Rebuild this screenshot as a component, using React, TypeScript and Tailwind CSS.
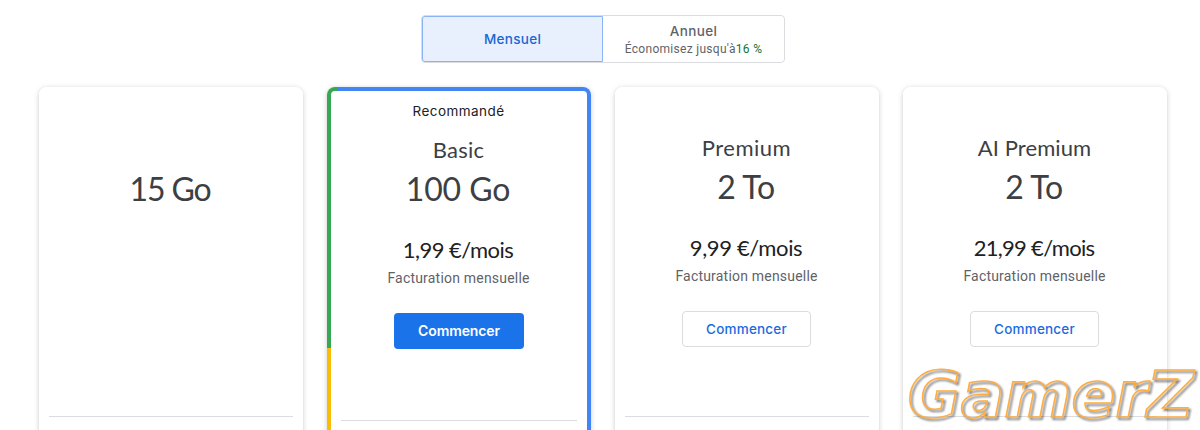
import React from "react";
import clsx from "clsx";

interface Plan {
  id: string;
  name?: string;
  storage: string;
  price?: string;
  storageSpacing: string;
  nameSpacing?: string;
  priceSpacing?: string;
  featured?: boolean;
}

const plans: Plan[] = [
  { id: "free", storage: "15 Go", storageSpacing: "tracking-[-1.1px]" },
  {
    id: "basic",
    name: "Basic",
    storage: "100 Go",
    price: "1,99 €/mois",
    storageSpacing: "tracking-[-0.1px]",
    nameSpacing: "tracking-[0.2px]",
    priceSpacing: "tracking-[-0.55px]",
    featured: true,
  },
  {
    id: "premium",
    name: "Premium",
    storage: "2 To",
    price: "9,99 €/mois",
    storageSpacing: "tracking-[-0.3px]",
    nameSpacing: "tracking-[0.5px]",
    priceSpacing: "tracking-[-0.35px]",
  },
  {
    id: "ai-premium",
    name: "AI Premium",
    storage: "2 To",
    price: "21,99 €/mois",
    storageSpacing: "tracking-[-0.3px]",
    nameSpacing: "tracking-[0.1px]",
    priceSpacing: "tracking-[-0.7px]",
  },
];

const BillingToggle: React.FC = () => {
  return (
    <div className="mx-auto flex h-12 w-[364px] translate-x-[3px] rounded border border-[#dadce0] font-['Roboto',sans-serif]">
      <button className="h-[46px] w-[181px] rounded-l-[3px] border border-[#8ab4f8] bg-[#e8f0fe] pt-px font-['Inter',sans-serif] text-[13.5px] font-medium tracking-[0.3px] text-[#1967d2]">
        Mensuel
      </button>
      <button className="flex flex-1 flex-col items-center text-[#5f6368]">
        <span className="mt-[5px] font-['Inter',sans-serif] text-[13.5px] leading-5 font-medium tracking-[0.4px]">
          Annuel
        </span>
        <span className="text-xs leading-4 tracking-[0.3px]">
          Économisez jusqu'à<span className="text-[#137333]">16 %</span>
        </span>
      </button>
    </div>
  );
};

const PlanCard: React.FC<{ plan: Plan }> = ({ plan }) => {
  return (
    <div
      className={clsx(
        "h-[400px] w-[264px] rounded-lg shadow-[0_1px_5px_rgba(60,64,67,0.28)]",
        plan.featured
          ? "bg-[linear-gradient(#34a853,#34a853),linear-gradient(#fbbc04,#fbbc04),linear-gradient(#4285f4,#4285f4)] bg-[length:11px_261px,11px_100%,100%_100%] bg-no-repeat p-1"
          : "bg-white"
      )}
    >
      <div
        className={clsx(
          "flex h-full flex-col items-center bg-white font-['Lato',sans-serif]",
          plan.featured ? "rounded-[4px]" : "rounded-lg"
        )}
      >
        <div
          className={clsx(
            "flex w-full shrink-0 justify-center pr-px font-['Inter',sans-serif] text-[13.5px] leading-5 tracking-[0.45px] text-[#202124]",
            plan.featured ? "h-[39px] pt-[10px]" : "h-[41px]"
          )}
        >
          {plan.featured && "Recommandé"}
        </div>
        <div className={clsx("h-10 shrink-0 pr-px text-[22px] leading-10 text-[#3c4043]", plan.nameSpacing)}>
          {plan.name}
        </div>
        <div
          className={clsx(
            "h-10 shrink-0 pr-[2px] text-[32px] leading-[37px] text-[#3c4043]",
            plan.storageSpacing,
            !plan.name && "translate-y-0.5"
          )}
        >
          {plan.storage}
        </div>
        <div className="flex h-52 shrink-0 flex-col items-center pt-[22px]">
          {plan.price && (
            <>
              <p className={clsx("pr-[2px] text-[22px] leading-9 text-[#202124]", plan.priceSpacing)}>{plan.price}</p>
              <p className="pr-px font-['Roboto',sans-serif] text-sm leading-5 tracking-[0.2px] text-[#5f6368]">
                Facturation mensuelle
              </p>
              <button
                className={clsx(
                  "mt-[25px] h-9 rounded font-['Inter',sans-serif] text-sm",
                  plan.featured
                    ? "w-[130px] bg-[#1a73e8] font-semibold tracking-[-0.1px] text-white"
                    : "mr-px w-[129px] border border-[#dadce0] pt-px text-[13.5px] font-medium tracking-[0.2px] text-[#1a6be0]"
                )}
              >
                Commencer
              </button>
            </>
          )}
        </div>
        <div className={clsx("h-px shrink-0 bg-[#dadce0]", plan.featured ? "w-[236px] translate-y-[2px]" : "w-[244px]")} />
      </div>
    </div>
  );
};

const Watermark: React.FC = () => {
  return (
    <svg
      className="pointer-events-none absolute top-[350px] left-[900px] h-20 w-[300px] overflow-visible drop-shadow-[2px_2px_1px_rgba(0,0,0,0.6)]"
      viewBox="0 0 300 80"
    >
      <text
        x="7.5"
        y="66.5"
        fill="none"
        stroke="#ffad42"
        strokeWidth="1.6"
        className="font-['DejaVu_Sans',sans-serif] text-[64.5px] font-bold italic"
      >
        GamerZ
      </text>
    </svg>
  );
};

const App: React.FC = () => {
  return (
    <main className="relative h-[430px] w-[1200px] overflow-hidden bg-white pt-[15px]">
      <BillingToggle />
      <div className="mt-6 ml-[39px] flex gap-6">
        {plans.map((plan) => (
          <PlanCard key={plan.id} plan={plan} />
        ))}
      </div>
      <Watermark />
    </main>
  );
};

export default App;
